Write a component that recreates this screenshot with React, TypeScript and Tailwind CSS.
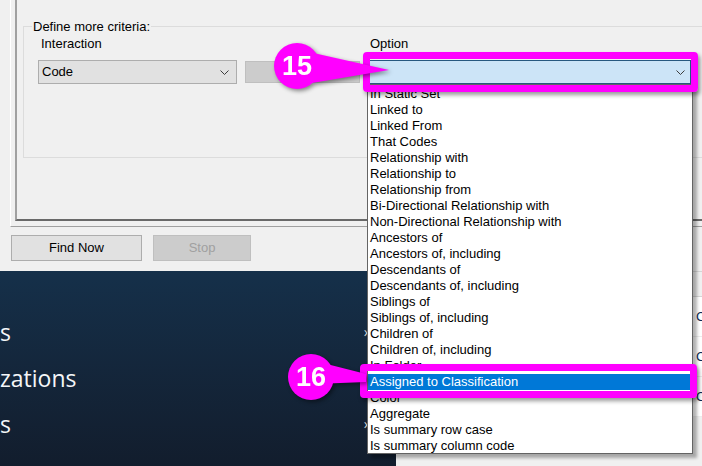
const OPTIONS = [
  "In Static Set",
  "Linked to",
  "Linked From",
  "That Codes",
  "Relationship with",
  "Relationship to",
  "Relationship from",
  "Bi-Directional Relationship with",
  "Non-Directional Relationship with",
  "Ancestors of",
  "Ancestors of, including",
  "Descendants of",
  "Descendants of, including",
  "Siblings of",
  "Siblings of, including",
  "Children of",
  "Children of, including",
  "In Folder",
  "Assigned to Classification",
  "Color",
  "Aggregate",
  "Is summary row case",
  "Is summary column code",
];

const SELECTED = "Assigned to Classification";

function Chevron() {
  return (
    <svg width="9" height="5" viewBox="0 0 9 5" className="shrink-0">
      <path d="M0.5 0.5 L4.5 4.5 L8.5 0.5" fill="none" stroke="#3c3c3c" strokeWidth="1" />
    </svg>
  );
}

function Callout({ label, className, wedge }: { label: string; className: string; wedge: string }) {
  return (
    <svg
      width="124"
      height="56"
      viewBox="0 0 124 56"
      className={`pointer-events-none absolute drop-shadow-[2px_2px_2px_rgba(0,0,0,0.45)] ${className}`}
    >
      <polygon points={wedge} fill="#ff00ff" />
      <circle cx="26" cy="26" r="23" fill="#ff00ff" />
      <text
        x="26"
        y="35"
        textAnchor="middle"
        fill="#ffffff"
        fontSize="27"
        fontWeight="700"
        fontFamily="Liberation Sans, Arial, sans-serif"
      >
        {label}
      </text>
    </svg>
  );
}

export default function App() {
  return (
    <div className="relative h-[466px] w-[702px] overflow-hidden bg-[#f0f0f0] font-['Liberation_Sans',Arial,sans-serif] text-[13px] leading-4 text-black">
      {/* dialog */}
      <div className="h-[271px]">
        <div className="ml-[10px] h-[227px] border-b border-l border-b-[#a0a0a0] border-l-white">
          <div className="ml-[4px] h-[221px] border-b-2 border-l-2 border-b-[#696969] border-l-[#a0a0a0] pl-[6px] pt-[19px]">
            <fieldset className="h-[139px] w-[700px] border border-[#dcdcdc] pl-[8px]">
              <legend className="px-px leading-[15px]">Define more criteria:</legend>
              <div className="flex pl-[6px] pt-[2px]">
                <div className="w-[199px]">
                  <div className="pl-[3px]">Interaction</div>
                  <div className="mt-[8px] flex h-[24px] items-center justify-between border border-[#adadad] bg-[#e1e1e1] pl-[3px] pr-[7px]">
                    Code
                    <Chevron />
                  </div>
                </div>
                <div className="ml-[8px] mt-[25px] h-[22px] w-[115px] border border-[#bfbfbf] bg-[#cccccc]" />
                <div className="ml-[8px] w-[323px]">
                  <div className="pl-[2px]">Option</div>
                  <div className="mt-[8px] flex h-[24px] items-center justify-end border border-[#27587f] bg-[#cce4f7] pr-[5px]">
                    <Chevron />
                  </div>
                </div>
              </div>
            </fieldset>
          </div>
        </div>
        <div className="flex gap-[11px] pl-[11px] pt-[8px]">
          <div className="flex h-[26px] w-[131px] items-center justify-center border border-[#adadad] bg-[#e1e1e1]">
            Find Now
          </div>
          <div className="flex h-[26px] w-[98px] items-center justify-center border border-[#bfbfbf] bg-[#cccccc] text-[#a0a0a0]">
            Stop
          </div>
        </div>
      </div>

      {/* page behind the dialog */}
      <div className="flex h-[195px]">
        <div className="w-[396px] shrink-0 bg-linear-to-b from-[#15304a] to-[#121d2d] pt-[38px] font-['Open_Sans',sans-serif] text-[23px] leading-none text-[#f4f6f8]">
          {["s", "zations", "s"].map((t, i) => (
            <div key={i} className="flex h-[46px] items-center justify-between pr-[28px]">
              <span>{t}</span>
              <span className="text-[14px] text-[#d0d6dc]">›</span>
            </div>
          ))}
        </div>
        <div className="flex min-w-0 flex-1 flex-col overflow-hidden bg-white">
          <div className="h-[26px] border-y border-[#d5d5d5] bg-[#f0f0f0]" />
          {[0, 1, 2].map((i) => (
            <div key={i} className="flex h-[40px] items-center border-b border-[#ececec] pl-[300px] text-[#0b2a55]">
              Code
            </div>
          ))}
          <div className="flex-1 bg-[#f0f0f0]" />
        </div>
      </div>

      {/* open dropdown */}
      <div className="absolute left-[367px] top-[84px] h-[370px] w-[326px] overflow-hidden border border-[#646464] bg-white pt-px shadow-[4px_4px_3px_rgba(0,0,0,0.3)]">
        {OPTIONS.map((o) => (
          <div
            key={o}
            className={`h-4 whitespace-nowrap pl-[2px] leading-4 ${o === SELECTED ? "bg-[#0078d7] text-white" : ""}`}
          >
            {o}
          </div>
        ))}
      </div>

      {/* annotation frames */}
      <div className="absolute left-[363px] top-[52px] h-[40px] w-[335px] rounded-[4px] border-[7px] border-[#ff00ff] shadow-[2px_3px_4px_rgba(0,0,0,0.4)]" />
      <div className="absolute left-[360px] top-[364px] h-[34px] w-[337px] rounded-[4px] border-[7px] border-[#ff00ff] shadow-[2px_3px_4px_rgba(0,0,0,0.4)]" />

      <Callout label="15" className="left-[271px] top-[40px]" wedge="29,10 118,30 29,45" />
      <Callout label="16" className="left-[285px] top-[351px]" wedge="30,10 81,23 81,31 30,33" />
    </div>
  );
}
